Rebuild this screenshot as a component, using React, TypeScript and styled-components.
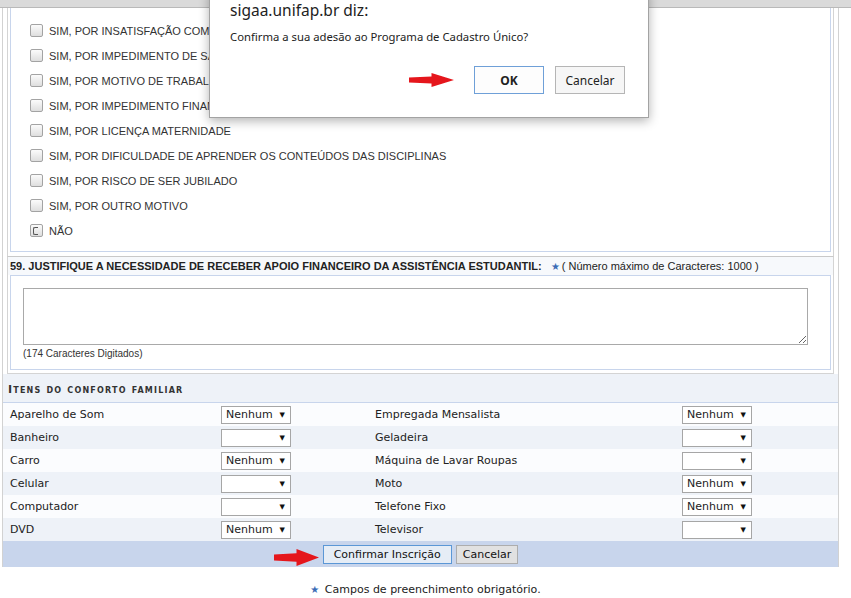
import { ReactElement } from 'react'
import styled, { createGlobalStyle } from 'styled-components'

const GlobalStyle = createGlobalStyle`
  body {
    margin: 0;
    background: #fff;
    font-family: 'DejaVu Sans', Verdana, sans-serif;
  }
`

const Page = styled.div`
  position: relative;
  width: 851px;
  height: 598px;
  overflow: hidden;
`

const TopBar = styled.div`
  height: 7px;
  background: #dadada;
  border-bottom: 1px solid #b9b9b9;
`

const Form = styled.div`
  margin-left: 2px;
  width: 835px;
  border-left: 1px solid #d2d2d2;
  border-right: 1px solid #d2d2d2;
`

const Cell = styled.div<{ $bottom?: boolean }>`
  margin: 0 4px;
  padding: 0 2px ${(p) => (p.$bottom ? '3px' : '4px')};
  border-left: 1px solid #d4d4d4;
  border-right: 1px solid #d4d4d4;
  border-bottom: ${(p) => (p.$bottom ? '1px solid #d4d4d4' : 'none')};
`

const OptionBox = styled.div`
  border: 1px solid #c8d5ec;
  border-top: none;
  padding: 10px 0 8px 19px;
`

const OptionRow = styled.div`
  height: 25px;
  display: flex;
  align-items: center;
  gap: 6px;
`

const Check = styled.span<{ $focus?: boolean }>`
  position: relative;
  width: 13px;
  height: 13px;
  box-sizing: border-box;
  border: 1px solid #a3a3a3;
  border-radius: 2px;
  background: linear-gradient(#fbfbfb, #dedede);
  &::after {
    content: '';
    display: ${(p) => (p.$focus ? 'block' : 'none')};
    position: absolute;
    left: 2px;
    top: 2px;
    width: 4px;
    height: 6px;
    border-left: 1px solid #555;
    border-top: 1px solid #555;
    border-bottom: 1px solid #555;
    border-radius: 2px 0 0 2px;
  }
`

const OptionLabel = styled.span`
  font: 11px 'Liberation Sans', Arial, sans-serif;
  color: #333;
`

const QuestionHeader = styled.div`
  margin: 0 4px;
  padding: 0 2px;
  height: 18px;
  display: flex;
  align-items: center;
  border-top: 1px solid #c9c9c9;
  border-left: 1px solid #d4d4d4;
  border-right: 1px solid #d4d4d4;
  background: #f7f9fc;
  font: 11px 'Liberation Sans', Arial, sans-serif;
  color: #222;
`

const QuestionTitle = styled.b`
  font-weight: bold;
  margin-right: 9px;
`

const Star = styled.span`
  color: #3b6cb6;
  font-size: 10px;
  margin-right: 2px;
`

const AnswerBox = styled.div`
  border: 1px solid #c8d5ec;
  padding: 12px 0 9px 12px;
`

const TextArea = styled.textarea`
  display: block;
  width: 785px;
  height: 57px;
  margin: 0;
  padding: 2px;
  box-sizing: border-box;
  border: 1px solid #a9a9a9;
  font: 11px 'Liberation Sans', Arial, sans-serif;
`

const Counter = styled.div`
  margin-top: 3px;
  font: 10px/12px 'Liberation Sans', Arial, sans-serif;
  color: #333;
`

const SectionHeader = styled.div`
  height: 29px;
  box-sizing: border-box;
  padding: 9px 0 0 5px;
  line-height: 14px;
  background: #eef2f8;
  border-bottom: 1px solid #c8d5ec;
  font-size: 11px;
  font-weight: bold;
  font-variant: small-caps;
  letter-spacing: 1.2px;
  color: #333;
`

const ItemRow = styled.div<{ $odd: boolean }>`
  display: grid;
  grid-template-columns: 218px 154px 307px 1fr;
  align-items: center;
  height: 23px;
  background: ${(p) => (p.$odd ? '#eef2f8' : '#fbfcfe')};
  font-size: 11px;
  color: #222;
`

const ItemLabel = styled.span`
  padding-left: 7px;
`

const Select = styled.div`
  width: 70px;
  height: 18px;
  box-sizing: border-box;
  border: 1px solid #a6a6a6;
  background: #fff;
  display: flex;
  align-items: center;
  justify-content: space-between;
  padding: 0 5px 0 4px;
  font-size: 11px;
  color: #222;
`

const Caret = styled.span`
  font-size: 7px;
  color: #111;
`

const Footer = styled.div`
  height: 26px;
  background: #c8d5ec;
  display: flex;
  align-items: center;
  justify-content: center;
`

const ButtonGroup = styled.div`
  position: relative;
  display: flex;
  gap: 4px;
`

const FormButton = styled.button<{ $primary?: boolean }>`
  height: 19px;
  padding: 0 ${(p) => (p.$primary ? '10px' : '6px')};
  font: 11px 'DejaVu Sans', Verdana, sans-serif;
  color: #111;
  border: 1px solid ${(p) => (p.$primary ? '#5b97d6' : '#adadad')};
  background: ${(p) => (p.$primary ? '#e6edf6' : '#e1e1e1')};
`

const FooterArrow = styled.svg`
  position: absolute;
  right: calc(100% + 4px);
  top: 4px;
`

const Note = styled.div`
  padding-top: 17px;
  text-align: center;
  font-size: 11px;
  line-height: 12px;
  color: #222;
`

const Dialog = styled.div`
  position: absolute;
  left: 209px;
  top: -11px;
  width: 440px;
  box-sizing: border-box;
  padding: 10px 23px 23px 20px;
  background: #fff;
  border: 1px solid #a3a3a3;
  box-shadow: 0 3px 10px rgba(0, 0, 0, 0.3);
  font-family: 'Noto Sans', 'Open Sans', sans-serif;
  color: #222;
`

const DialogTitle = styled.div`
  font-size: 15.5px;
  line-height: 20px;
`

const DialogMessage = styled.div`
  margin-top: 9px;
  font-size: 11.3px;
  line-height: 16px;
`

const DialogActions = styled.div`
  margin-top: 21px;
  display: flex;
  justify-content: flex-end;
  align-items: center;
  gap: 11px;
`

const DialogButton = styled.button<{ $primary?: boolean }>`
  width: 70px;
  height: 28px;
  font: ${(p) => (p.$primary ? 'bold' : 'normal')} 12px 'Noto Sans', 'Open Sans', sans-serif;
  color: #222;
  border: 1px solid ${(p) => (p.$primary ? '#6fa0d8' : '#b5b5b5')};
  background: ${(p) => (p.$primary ? '#fdfdfd' : '#f6f6f6')};
`

const DialogArrow = styled.svg`
  margin-right: 9px;
`

const options = [
  'SIM, POR INSATISFAÇÃO COM O CURSO',
  'SIM, POR IMPEDIMENTO DE SAÚDE',
  'SIM, POR MOTIVO DE TRABALHO',
  'SIM, POR IMPEDIMENTO FINANCEIRO',
  'SIM, POR LICENÇA MATERNIDADE',
  'SIM, POR DIFICULDADE DE APRENDER OS CONTEÚDOS DAS DISCIPLINAS',
  'SIM, POR RISCO DE SER JUBILADO',
  'SIM, POR OUTRO MOTIVO',
  'NÃO',
]

const items: [string, string, string, string][] = [
  ['Aparelho de Som', 'Nenhum', 'Empregada Mensalista', 'Nenhum'],
  ['Banheiro', '', 'Geladeira', ''],
  ['Carro', 'Nenhum', 'Máquina de Lavar Roupas', ''],
  ['Celular', '', 'Moto', 'Nenhum'],
  ['Computador', '', 'Telefone Fixo', 'Nenhum'],
  ['DVD', 'Nenhum', 'Televisor', ''],
]

function RedArrow({ w, h }: { w: number; h: number }) {
  const mid = h / 2
  const neck = w * 0.5
  return (
    <polygon
      points={`0,${mid - h * 0.17} ${neck},${mid - h * 0.25} ${neck},0 ${w},${mid} ${neck},${h} ${neck},${mid + h * 0.25} 0,${mid + h * 0.17}`}
      fill='#e5161c'
    />
  )
}

export default function App(): ReactElement {
  return (
    <Page>
      <GlobalStyle />
      <TopBar />
      <Form>
        <Cell>
          <OptionBox>
            {options.map((opt, i) => (
              <OptionRow key={opt}>
                <Check $focus={i === options.length - 1} />
                <OptionLabel>{opt}</OptionLabel>
              </OptionRow>
            ))}
          </OptionBox>
        </Cell>

        <QuestionHeader>
          <QuestionTitle>59. JUSTIFIQUE A NECESSIDADE DE RECEBER APOIO FINANCEIRO DA ASSISTÊNCIA ESTUDANTIL:</QuestionTitle>
          <Star>★</Star>( Número máximo de Caracteres: 1000 )
        </QuestionHeader>

        <Cell $bottom>
          <AnswerBox>
            <TextArea readOnly defaultValue='' />
            <Counter>(174 Caracteres Digitados)</Counter>
          </AnswerBox>
        </Cell>

        <SectionHeader>Itens do conforto familiar</SectionHeader>
        {items.map(([l1, v1, l2, v2], i) => (
          <ItemRow key={l1} $odd={i % 2 === 1}>
            <ItemLabel>{l1}</ItemLabel>
            <Select>
              <span>{v1}</span>
              <Caret>▼</Caret>
            </Select>
            <span>{l2}</span>
            <Select>
              <span>{v2}</span>
              <Caret>▼</Caret>
            </Select>
          </ItemRow>
        ))}

        <Footer>
          <ButtonGroup>
            <FooterArrow width='45' height='17' viewBox='0 0 45 17'>
              <RedArrow w={45} h={17} />
            </FooterArrow>
            <FormButton $primary>Confirmar Inscrição</FormButton>
            <FormButton>Cancelar</FormButton>
          </ButtonGroup>
        </Footer>
      </Form>

      <Note>
        <Star>★</Star> Campos de preenchimento obrigatório.
      </Note>

      <Dialog>
        <DialogTitle>sigaa.unifap.br diz:</DialogTitle>
        <DialogMessage>Confirma a sua adesão ao Programa de Cadastro Único?</DialogMessage>
        <DialogActions>
          <DialogArrow width='45' height='14' viewBox='0 0 45 14'>
            <RedArrow w={45} h={14} />
          </DialogArrow>
          <DialogButton $primary>OK</DialogButton>
          <DialogButton>Cancelar</DialogButton>
        </DialogActions>
      </Dialog>
    </Page>
  )
}
